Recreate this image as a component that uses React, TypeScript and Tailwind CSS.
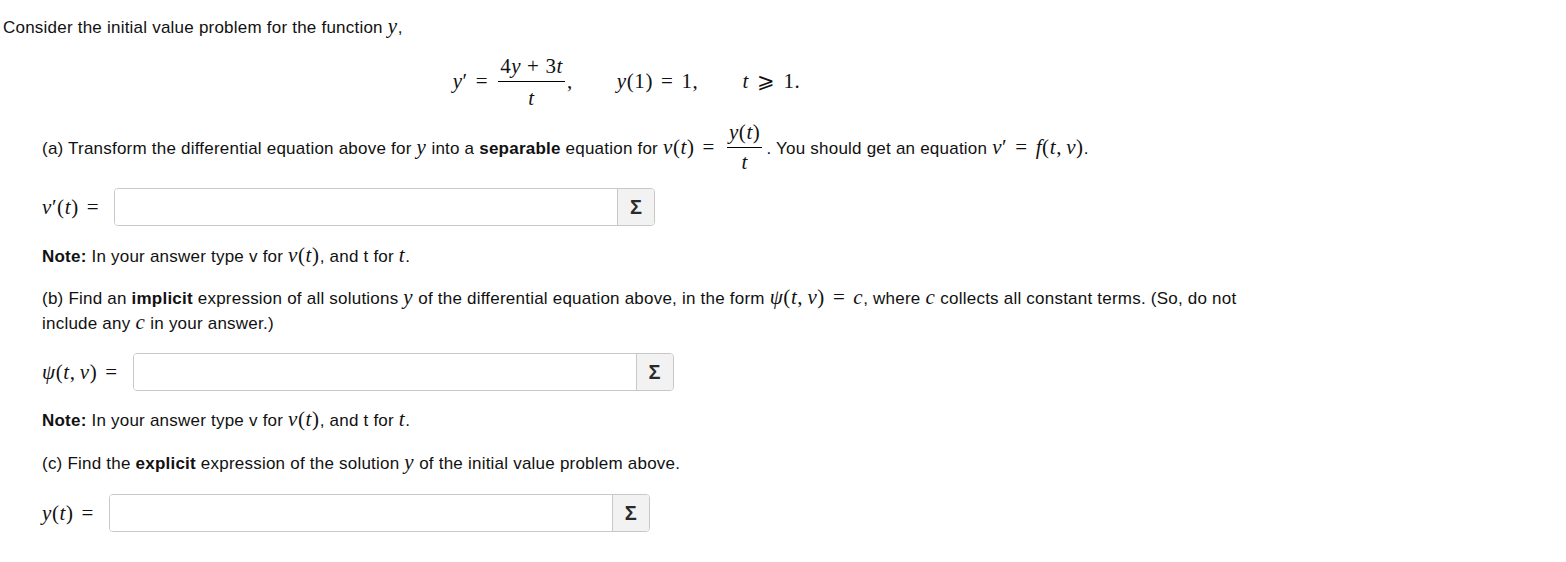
import React from "react";

const serif = "font-['Liberation_Serif',serif]";

function M({ children, className = "" }: { children: React.ReactNode; className?: string }) {
  return <span className={`${serif} text-[21px] leading-none tracking-[0.6px] ${className}`}>{children}</span>;
}

function V({ children }: { children: React.ReactNode }) {
  return <i className="italic">{children}</i>;
}

// relation (thick space) and binary operator (medium space), like TeX
function Rel({ children = "=" }: { children?: React.ReactNode }) {
  return <span className="mx-[0.38em]">{children}</span>;
}

function Bin({ children }: { children: React.ReactNode }) {
  return <span className="mx-[0.28em]">{children}</span>;
}

function Comma() {
  return <span className="mr-[0.2em]">,</span>;
}

function Frac({ num, den }: { num: React.ReactNode; den: React.ReactNode }) {
  return (
    <span className={`inline-flex flex-col items-center align-middle pb-[6px] ${serif} text-[21px] tracking-[0.6px] mx-[4px]`}>
      <span className="leading-[20px] px-[2px] pb-[5px] border-b border-black">{num}</span>
      <span className="leading-[20px] pt-[4px]">{den}</span>
    </span>
  );
}

function AnswerBox() {
  return (
    <div className="flex w-[541px] h-[38px] border border-[#c8c8c8] rounded-[4px] bg-white overflow-hidden">
      <input className="flex-1 outline-none px-2 bg-white" />
      <div className="w-[37px] border-l border-[#c8c8c8] bg-[#f2f2f2] flex items-center justify-center">
        <span className="font-['Liberation_Sans',sans-serif] font-bold text-[20px] text-[#2a2a2a] leading-none">Σ</span>
      </div>
    </div>
  );
}

function AnswerRow({ label }: { label: React.ReactNode }) {
  return (
    <div className="flex items-center gap-[7px]">
      <M className="whitespace-nowrap">{label}</M>
      <AnswerBox />
    </div>
  );
}

function Note({ className = "" }: { className?: string }) {
  return (
    <p className={`leading-6 ${className}`}>
      <b>Note:</b> In your answer type v for{" "}
      <M>
        <V>v</V>(<V>t</V>)
      </M>
      , and t for{" "}
      <M>
        <V>t</V>
      </M>
      .
    </p>
  );
}

export default function App() {
  return (
    <div className="w-[1250px] pl-[3px] pt-4 font-['Liberation_Sans',Arial,sans-serif] text-[17px] tracking-[0.22px] text-[#111]">
      <p className="leading-6">
        Consider the initial value problem for the function{" "}
        <M>
          <V>y</V>
        </M>
        ,
      </p>

      <div className={`mt-[10px] h-[64px] flex items-center justify-center ${serif} text-[21px] tracking-[0.6px]`}>
        <span>
          <V>y</V>′
        </span>
        <Rel />
        <span className="inline-flex flex-col items-center mx-[2px]">
          <span className="leading-[22px] px-[2px] pb-[4px] border-b border-black">
            4<V>y</V>
            <Bin>+</Bin>3<V>t</V>
          </span>
          <span className="leading-[22px] pt-[5px]">
            <V>t</V>
          </span>
        </span>
        <span className="mr-[44px]">,</span>
        <span>
          <V>y</V>(1)
          <Rel />
          1,
        </span>
        <span className="ml-[44px]">
          <V>t</V>
          <Rel>⩾</Rel>1.
        </span>
      </div>

      <div className="pl-[39px]">
        <p className="mt-2 leading-6">
          (a) Transform the differential equation above for{" "}
          <M>
            <V>y</V>
          </M>{" "}
          into a <b>separable</b> equation for{" "}
          <M>
            <V>v</V>(<V>t</V>)
            <Rel />
          </M>
          <Frac
            num={
              <>
                <V>y</V>(<V>t</V>)
              </>
            }
            den={<V>t</V>}
          />
          . You should get an equation{" "}
          <M>
            <V>v</V>′
            <Rel />
            <V>f</V>(<V>t</V>
            <Comma />
            <V>v</V>)
          </M>
          .
        </p>

        <div className="mt-[10px]">
          <AnswerRow
            label={
              <>
                <V>v</V>′(<V>t</V>)
                <Rel />
              </>
            }
          />
        </div>

        <Note className="mt-[19px]" />

        <p className="mt-[17px] leading-[25px] w-[1205px]">
          (b) Find an <b>implicit</b> expression of all solutions{" "}
          <M>
            <V>y</V>
          </M>{" "}
          of the differential equation above, in the form{" "}
          <M>
            <V>ψ</V>(<V>t</V>
            <Comma />
            <V>v</V>)
            <Rel />
            <V>c</V>
          </M>
          , where{" "}
          <M>
            <V>c</V>
          </M>{" "}
          collects all constant terms. (So, do not include any{" "}
          <M>
            <V>c</V>
          </M>{" "}
          in your answer.)
        </p>

        <div className="mt-[17px]">
          <AnswerRow
            label={
              <>
                <V>ψ</V>(<V>t</V>
                <Comma />
                <V>v</V>)
                <Rel />
              </>
            }
          />
        </div>

        <Note className="mt-[18px]" />

        <p className="mt-[19px] leading-6">
          (c) Find the <b>explicit</b> expression of the solution{" "}
          <M>
            <V>y</V>
          </M>{" "}
          of the initial value problem above.
        </p>

        <div className="mt-[18px]">
          <AnswerRow
            label={
              <>
                <V>y</V>(<V>t</V>)
                <Rel />
              </>
            }
          />
        </div>
      </div>
    </div>
  );
}
